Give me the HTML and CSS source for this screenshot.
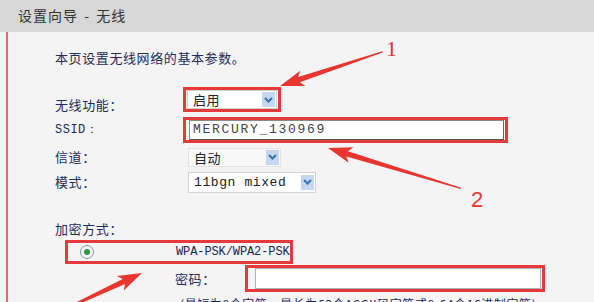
FILE: index.html
```html
<!DOCTYPE html>
<html>
<head>
  <title>设置向导 - 无线</title>
  <meta charset="UTF-8">
  <link rel="stylesheet" href="styles.css">
</head>
<body>

<div class="header">设置向导 - 无线</div>

<div class="panel">
  <p class="intro">本页设置无线网络的基本参数。</p>

  <div class="row row-enable">
    <span class="label label-low">无线功能：</span>
    <div class="field hl">
      <div class="select sel-enable"><span>启用</span><i class="arrow"><svg width="9" height="6" viewBox="0 0 9 6"><polyline points="1,1 4.5,4.5 8,1" fill="none" stroke="#3b6db5" stroke-width="2"/></svg></i></div>
    </div>
  </div>

  <div class="row row-ssid">
    <span class="label mono-label">SSID：</span>
    <div class="field hl field-ssid">
      <div class="input ssid">MERCURY_130969</div>
    </div>
  </div>

  <div class="row row-plain">
    <span class="label">信道：</span>
    <div class="field">
      <div class="select sel-channel"><span>自动</span><i class="arrow"><svg width="9" height="6" viewBox="0 0 9 6"><polyline points="1,1 4.5,4.5 8,1" fill="none" stroke="#3b6db5" stroke-width="2"/></svg></i></div>
    </div>
  </div>

  <div class="row row-plain">
    <span class="label">模式：</span>
    <div class="field">
      <div class="select sel-mode"><span class="mono">11bgn mixed</span><i class="arrow"><svg width="9" height="6" viewBox="0 0 9 6"><polyline points="1,1 4.5,4.5 8,1" fill="none" stroke="#3b6db5" stroke-width="2"/></svg></i></div>
    </div>
  </div>

  <p class="section">加密方式：</p>

  <div class="hl wpa">
    <span class="radio"><span class="dot"></span></span>
    <span class="wpa-text">WPA-PSK/WPA2-PSK</span>
  </div>

  <div class="row row-pass">
    <span class="label pass-label">密码：</span>
    <div class="field hl field-pass">
      <div class="input pass"></div>
    </div>
  </div>

  <p class="note">(最短为8个字符，最长为63个ASCII码字符或8-64个16进制字符)</p>
</div>

<!-- 标注箭头 -->
<svg class="marks" width="594" height="302" viewBox="0 0 594 302">
  <g fill="#e8352f">
    <polygon transform="translate(280 86) rotate(-18.4)" points="0,0 24,-8 20,-2.8 108,-0.7 108,0.7 20,2.8 24,8"/>
    <polygon transform="translate(328 148) rotate(16.9)" points="0,0 24,-8 20,-2.8 139,-0.7 139,0.7 20,2.8 24,8"/>
    <polygon transform="translate(142 273) rotate(154.9)" points="0,0 24,-8 20,-2.8 90,-0.9 90,0.9 20,2.8 24,8"/>
  </g>
  <text x="386" y="56" class="num num-1">1</text>
  <text x="471" y="207" class="num num-2">2</text>
</svg>

</body>
</html>
```

FILE: styles.css
```css
body {
  margin: 0;
  background-color: #f4f4f4;
  font-family: "Noto Sans CJK SC", "Liberation Sans", sans-serif;
  position: relative;
  height: 302px;
  overflow: hidden;
}

.header {
  height: 32px;
  line-height: 30px;
  padding-left: 18px;
  background-color: #d7d7d7;
  color: #333;
  font-size: 14px;
  letter-spacing: 1px;
  word-spacing: 2px;
  box-sizing: border-box;
}

.panel {
  margin-left: 6px;
  border-left: 2px solid #e36b6b;
  padding: 17px 0 0 47px;
  height: 270px;
  box-sizing: border-box;
  color: #1f2b58;
  font-size: 13px;
  letter-spacing: 0.6px;
}

.intro {
  margin: 0;
  height: 18px;
  line-height: 18px;
}

.row {
  display: flex;
  align-items: center;
}

.row-enable {
  margin-top: 20px;
  height: 25px;
}

.row-ssid {
  margin-top: 5px;
  height: 26px;
}

.row-plain {
  margin-top: 3px;
  height: 22px;
}

.label {
  width: 128px;
  flex-shrink: 0;
  line-height: 18px;
}

.label-low {
  padding-top: 10px;
}

.mono-label {
  font-family: "Liberation Mono", monospace;
  font-size: 12px;
  letter-spacing: 0.5px;
}

.field {
  border: 3px solid transparent;
  padding-left: 2px;
  display: flex;
  align-items: center;
  box-sizing: border-box;
}

.hl {
  border: 3px solid #e5393a;
}

.row-enable .field {
  height: 25px;
  padding: 0 1px;
}

.select {
  display: flex;
  align-items: center;
  justify-content: space-between;
  background-color: #fff;
  border: 1px solid #d2d2d2;
  box-sizing: border-box;
  color: #222;
  padding-left: 5px;
}

.sel-enable {
  width: 90px;
  height: 19px;
}

.sel-channel {
  width: 93px;
  height: 19px;
  border-color: #e2e2e2;
  background-color: #f8f8f8;
}

.sel-mode {
  width: 128px;
  height: 21px;
}

.mono {
  font-family: "Liberation Mono", monospace;
  font-size: 13px;
  letter-spacing: 0.6px;
}

.arrow {
  width: 13px;
  height: 15px;
  margin-right: 1px;
  background-color: #c6d8f1;
  display: flex;
  align-items: center;
  justify-content: center;
}

.field-ssid {
  width: 325px;
  height: 26px;
  padding: 0 1px 0 3px;
}

.input {
  background-color: #fff;
  box-sizing: border-box;
  width: 100%;
}

.ssid {
  height: 20px;
  border: 1px solid #8a8a8a;
  border-bottom-color: #555;
  border-right-color: #666;
  font-family: "Liberation Mono", monospace;
  font-size: 13px;
  letter-spacing: 1.7px;
  color: #444;
  line-height: 18px;
  padding-left: 3px;
}

.section {
  margin: 27px 0 0 0;
  height: 18px;
  line-height: 18px;
}

.wpa {
  margin: 2px 0 0 10px;
  width: 228px;
  height: 24px;
  box-sizing: border-box;
  display: flex;
  align-items: center;
  padding-left: 12px;
}

.radio {
  width: 14px;
  height: 14px;
  border-radius: 50%;
  border: 1px solid #8c9aa6;
  background-color: #f2f4f6;
  box-sizing: border-box;
  display: flex;
  align-items: center;
  justify-content: center;
}

.dot {
  width: 6px;
  height: 6px;
  border-radius: 50%;
  background-color: #2d9a3c;
}

.wpa-text {
  margin-left: 82px;
  font-family: "Liberation Mono", monospace;
  font-size: 12px;
  letter-spacing: -0.1px;
  color: #1a2550;
}

.row-pass {
  margin-top: 1px;
  height: 27px;
  padding-left: 120px;
}

.pass-label {
  width: 70px;
}

.field-pass {
  width: 300px;
  height: 27px;
  padding: 0 1px 0 7px;
}

.pass {
  height: 21px;
  border: 1px solid #a9b2bf;
}

.note {
  margin: 3px 0 0 125px;
  white-space: nowrap;
  line-height: 18px;
  font-size: 12px;
}

.marks {
  position: absolute;
  top: 0;
  left: 0;
  pointer-events: none;
}

.num {
  fill: #e8352f;
  font-size: 22px;
}

.num-1 {
  font-family: "Liberation Serif", serif;
}

.num-2 {
  font-family: "Liberation Sans", sans-serif;
}
```
